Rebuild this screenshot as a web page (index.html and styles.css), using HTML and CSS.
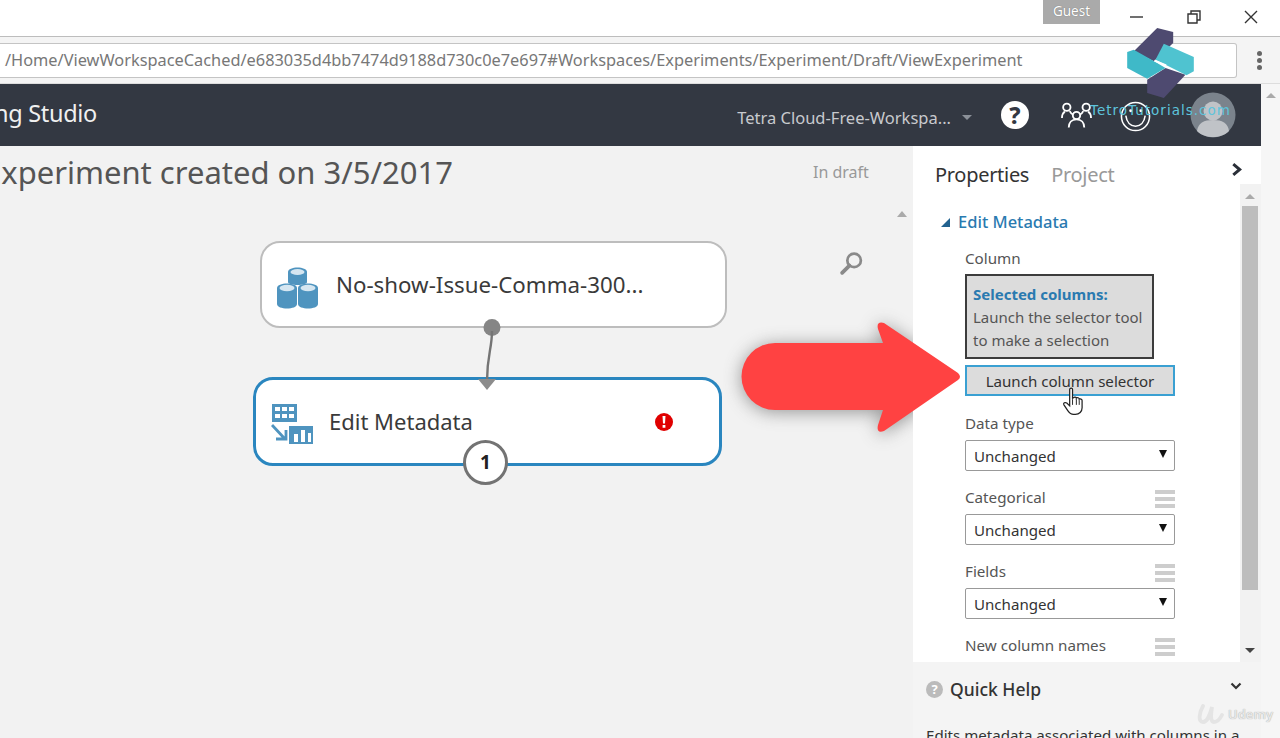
FILE: index.html
```html
<!DOCTYPE html>
<html lang="en">
<head>
<meta charset="utf-8">
<title>Experiment</title>
<link rel="stylesheet" href="styles.css">
</head>
<body>
<div class="page">
  <div class="titlebar">
    <span class="guest">Guest</span>
    <div class="winbtns">
      <svg class="winicon" viewBox="0 0 14 14"><path d="M0 7H13" /></svg>
      <svg class="winicon" viewBox="0 0 14 14"><path d="M1 4H10V13H1ZM4 4V1H13V10H10" /></svg>
      <svg class="winicon" viewBox="0 0 14 14"><path d="M1 1L13 13M13 1L1 13" /></svg>
    </div>
  </div>
  <div class="addressrow">
    <div class="address">/Home/ViewWorkspaceCached/e683035d4bb7474d9188d730c0e7e697#Workspaces/Experiments/Experiment/Draft/ViewExperiment</div>
    <div class="kebab"><i></i><i></i><i></i></div>
  </div>
  <div class="viewport">
    <div class="app">
      <header class="appbar">
        <span class="brand">ng Studio</span>
        <div class="appbar-right">
          <span class="workspace">Tetra Cloud-Free-Workspa...</span>
          <span class="caret"></span>
          <span class="help">?</span>
          <svg class="people" viewBox="0 0 32 28"><g fill="none" stroke="#fff" stroke-width="1.9"><circle cx="6" cy="6" r="3.8"/><circle cx="26" cy="6" r="3.8"/><circle cx="16" cy="14.500" r="3.8"/><path d="M1 17c0-3 1-5 3-6.500M31 17c0-3-1-5-3-6.500M9 10c1 2 2 3 3.500 3.500M23 10c-1 2-2 3-3.500 3.500M8 27c0-5 3-8.500 8-8.500s8 3.500 8 8.500"/></g></svg>
          <svg class="smile" viewBox="0 0 32 32"><g fill="none" stroke="#fff" stroke-width="1.6"><circle cx="16" cy="16" r="14.500"/><path d="M6 15c1 7 5 11 10 11s9-4 10-11"/></g><circle cx="11" cy="10" r="1.500" fill="#fff"/><circle cx="21.500" cy="10" r="1.500" fill="#fff"/></svg>
          <svg class="avatar" viewBox="0 0 46 46"><circle cx="23" cy="23" r="22.500" fill="#7b838c"/><circle cx="23" cy="19" r="9.500" fill="#c0c3c7"/><path d="M7 39c1-8 7-11 16-11s15 3 16 11c-4 4-10 6-16 6S11 43 7 39Z" fill="#c0c3c7"/></svg>
        </div>
      </header>
      <div class="workarea">
        <main class="canvas">
          <h1 class="exptitle">Experiment created on 3/5/2017</h1>
          <span class="draft">In draft</span>
          <span class="canvas-up"></span>
          <svg class="search" viewBox="0 0 24 24"><circle cx="14.500" cy="9" r="6.500" fill="none" stroke="#8a8a8a" stroke-width="2.600"/><path d="M10 14L3 21" stroke="#8a8a8a" stroke-width="3.600" stroke-linecap="round"/></svg>

          <div class="node node-data">
            <svg class="node-icon" viewBox="0 0 42 42">
              <g fill="#4f94bf"><path d="M11 5c0-6 19-6 19 0v10c0 4-19 4-19 0Z"/><path d="M0 21c0-6 20-6 20 0v16c0 6-20 6-20 0Z"/><path d="M21 21c0-6 20-6 20 0v16c0 6-20 6-20 0Z"/></g>
              <g fill="#d5e6f1"><ellipse cx="20.500" cy="5" rx="7" ry="3"/><ellipse cx="10" cy="21" rx="7.500" ry="3.200"/><ellipse cx="31" cy="21" rx="7.500" ry="3.200"/></g>
            </svg>
            <span>No-show-Issue-Comma-300...</span>
          </div>
          <div class="node node-edit">
            <svg class="node-icon" viewBox="0 0 42 42">
              <path d="M1 1H26V19H1Z" fill="#4f94bf"/>
              <g fill="#fff"><path d="M4 4H9V8H4ZM11 4H16V8H11ZM18 4H23V8H18ZM4 11H9V15H4ZM11 11H16V15H11ZM18 11H23V15H18Z"/></g>
              <path d="M18 23H42V41H18Z" fill="#4f94bf"/>
              <path d="M23 31H27V39H23ZM30 27H34V39H30ZM37 30H40V39H37Z" fill="#fff"/>
              <path d="M1 22L14 36M5 36H15V27" fill="none" stroke="#4f94bf" stroke-width="2.800"/>
            </svg>
            <span>Edit Metadata</span>
            <svg class="alert" viewBox="0 0 18 18"><circle cx="9" cy="9" r="9" fill="#e00000"/><path d="M7.500 3H10.500L10 10.500H8ZM7.600 12H10.400V14.800H7.600Z" fill="#fff"/></svg>
            <span class="badge">1</span>
          </div>
          <svg class="wire" viewBox="0 0 30 74"><circle cx="15" cy="8.500" r="8.500" fill="#858585"/><path d="M15 12C15 30 10 36 10 62" fill="none" stroke="#757575" stroke-width="2.400"/><path d="M1 60H19L10 71Z" fill="#8c8c8c"/></svg>
          <svg class="arrow-shadow" viewBox="0 0 240 125"><path d="M39 28H147L142 14Q140 6 148 8L222 58Q226 62 222 65L148 116Q140 119 142 110L147 95H39A33.500 33.500 0 0 1 39 28Z" fill="#555"/></svg>
        </main>
        <aside class="panel">
          <div class="tabs">
            <span class="tab-active">Properties</span>
            <span class="tab">Project</span>
            <svg class="tabs-chevron" viewBox="0 0 10 14"><path d="M2 2L8 7L2 12" fill="none" stroke="#2a2f38" stroke-width="2.800"/></svg>
          </div>
          <div class="props-wrap">
            <div class="props">
              <div class="section"><span class="section-tri"></span><span>Edit Metadata</span></div>
              <div class="field">
                <div class="label">Column</div>
                <div class="selected">
                  <strong>Selected columns:</strong>
                  <span>Launch the selector tool to make a selection</span>
                </div>
                <button class="launch">Launch column selector</button>
              </div>
              <div class="field field-datatype">
                <div class="label">Data type</div>
                <div class="select">Unchanged<span class="sel-tri"></span></div>
              </div>
              <div class="field">
                <div class="label labelrow">Categorical<span class="lines"><i></i><i></i><i></i></span></div>
                <div class="select">Unchanged<span class="sel-tri"></span></div>
              </div>
              <div class="field">
                <div class="label labelrow">Fields<span class="lines"><i></i><i></i><i></i></span></div>
                <div class="select">Unchanged<span class="sel-tri"></span></div>
              </div>
              <div class="field">
                <div class="label labelrow">New column names<span class="lines"><i></i><i></i><i></i></span></div>
              </div>
            </div>
            <div class="vscroll">
              <span class="vs-up"></span>
              <span class="vs-thumb"></span>
              <span class="vs-down"></span>
            </div>
          </div>
          <div class="quick">
            <div class="quick-head"><span class="q-icon">?</span><span class="q-title">Quick Help</span><svg class="q-chev" viewBox="0 0 12 8"><path d="M1.500 1.500L6 6L10.500 1.500" fill="none" stroke="#333" stroke-width="2.200"/></svg></div>
            <p class="quick-text">Edits metadata associated with columns in a</p>
          </div>
        </aside>
      </div>
    </div>
    <div class="pagescroll"><span class="ps-up"></span></div>
  </div>

  <svg class="arrow" viewBox="0 0 240 125">
    <path d="M39 28H147L142 14Q140 6 148 8L222 58Q226 62 222 65L148 116Q140 119 142 110L147 95H39A33.500 33.500 0 0 1 39 28Z" fill="#ff4242"/>
  </svg>
  <svg class="cursor" viewBox="0 0 22 30"><path d="M7 2c0-2 3-2 3 0v9l1-.5c1-1 3-.5 3 .5 1-1 3-.5 3 1 1-.5 3 0 3 1.500V21c0 4-3 7-7 7h-2c-3 0-4-1-6-4L1 18c-1-2 1-3 3-2l3 3Z" fill="#fff" stroke="#222" stroke-width="1.300"/><path d="M10 12v6M14 12v6M17 13v5" stroke="#222" stroke-width="1"/></svg>

  <svg class="logo" viewBox="380 85 200 210">
    <path d="M470 85L518 97V130L460 185L400 155Z" fill="#4e4a70"/>
    <path d="M495 205L555 225L490 295L440 280V240Z" fill="#4e4a70"/>
    <path d="M490 132L580 172V215L558 227L465 180Z" fill="#4fc3d0"/>
    <path d="M380 157L400 150L465 187L495 205L440 237L380 205Z" fill="#3fb9c8"/>
    <path d="M462 183L497 197" stroke="#fff" stroke-width="6"/>
  </svg>
  <span class="wm-tetra">TetroTutorials.com</span>
  <div class="wm-udemy"><svg class="u-mark" viewBox="0 0 28 20"><path d="M6 2C2 9 1 18 6 18c5 0 7-8 9-15-1 7-2 15 2 15 4 0 6-3 8-7" fill="none" stroke="#e4e4e4" stroke-width="3.800" stroke-linecap="round"/></svg><span>Udemy</span></div>
</div>
</body>
</html>
```
FILE: styles.css
```css
* { box-sizing: border-box; }
html, body { margin: 0; padding: 0; height: 738px; overflow: hidden; background: #fff; }
body { font-family: "Noto Sans", "Open Sans", sans-serif; color: #333; }
.page { position: relative; width: 1280px; height: 738px; overflow: hidden; display: flex; flex-direction: column; }

.titlebar { height: 37px; flex: none; background: #fff; display: flex; justify-content: flex-end; border-bottom: 1px solid #bdbdbd; padding-right: 22px; }
.guest { width: 57px; height: 24px; margin-right: 30px; background: #aaa; color: #fff; font-size: 13.500px; text-align: center; line-height: 23px; text-shadow: 0 0 1px #666; }
.winbtns { display: flex; gap: 43px; padding-top: 10px; }
.winicon { width: 14px; height: 14px; fill: none; stroke: #333; stroke-width: 1.400; }

.addressrow { height: 47px; flex: none; background: #f4f4f4; display: flex; align-items: center; border-bottom: 1px solid #ddd; }
.address { width: 1237px; height: 35px; background: #fff; border: 1px solid #c4c4c4; border-left: 0; border-radius: 0 3px 3px 0; font-size: 16.350px; line-height: 33px; color: #777; padding-left: 5px; white-space: nowrap; overflow: hidden; }
.kebab { width: 43px; display: flex; flex-direction: column; align-items: center; gap: 2px; padding-left: 2px; }
.kebab i { width: 5px; height: 5px; border-radius: 50%; background: #666; }

.viewport { flex: 1; display: flex; min-height: 0; }
.app { width: 1261px; display: flex; flex-direction: column; }
.appbar { height: 62px; flex: none; background: #333842; color: #fff; display: flex; align-items: center; justify-content: space-between; overflow: hidden; }
.brand { font-size: 23.500px; letter-spacing: -.3px; margin: -4px 0 0 -6px; color: #f0f0f0; }
.appbar-right { display: flex; align-items: center; padding-right: 25px; }
.workspace { font-size: 16.500px; color: #c8cace; margin-top: 4px; }
.caret { width: 0; height: 0; border: 5px solid transparent; border-top: 5px solid #8b9098; margin: 9px 0 0 11px; }
.help { width: 28px; height: 28px; margin-left: 29px; border-radius: 50%; background: #fff; color: #333842; font-weight: 800; font-size: 23px; line-height: 28px; text-align: center; }
.people { width: 31px; height: 28px; margin-left: 32px; }
.smile { width: 31px; height: 31px; margin-left: 28px; margin-top: 2px; }
.avatar { width: 46px; height: 46px; margin-left: 39px; }

.workarea { flex: 1; display: flex; min-height: 0; }
.canvas { position: relative; width: 913px; background: #f2f2f2; overflow: hidden; }
.exptitle { position: absolute; left: -16px; top: 5px; margin: 0; font-size: 31px; font-weight: 400; color: #555; white-space: nowrap; }
.draft { position: absolute; left: 813px; top: 15px; font-size: 16px; color: #999; }
.canvas-up { position: absolute; left: 897px; top: 65px; border: 5px solid transparent; border-top: 0; border-bottom: 6px solid #aaa; }
.search { position: absolute; left: 839px; top: 105px; width: 25px; height: 25px; }
.node { position: absolute; background: #fff; display: flex; align-items: center; color: #3a3a3a; white-space: nowrap; }
.node-data { left: 260px; top: 95px; width: 467px; height: 87px; border: 2px solid #bdbdbd; border-radius: 20px; padding-left: 15px; gap: 17px; font-size: 22.300px; }
.node-data .node-icon { margin-top: 6px; }
.node-edit { left: 253px; top: 231px; width: 469px; height: 89px; border: 3px solid #2a86bf; border-radius: 20px; padding-left: 15px; gap: 16px; font-size: 22px; padding-bottom: 1px; }
.node-edit .node-icon { margin-top: 6px; }
.node-icon { width: 42px; height: 42px; flex: none; }
.alert { position: absolute; left: 399px; top: 33px; width: 18px; height: 18px; }
.badge { position: absolute; left: 207px; top: 60px; width: 45px; height: 45px; border-radius: 50%; background: #fff; border: 3px solid #737373; font-size: 19px; font-weight: 700; line-height: 38px; text-align: center; color: #222; }
.wire { position: absolute; left: 477px; top: 173px; width: 30px; height: 74px; }
.arrow-shadow { position: absolute; left: 736px; top: 171px; width: 240px; height: 125px; filter: blur(9px); opacity: .6; }

.panel { width: 348px; background: #fff; display: flex; flex-direction: column; }
.tabs { height: 38px; flex: none; display: flex; align-items: flex-start; padding: 15px 0 0 22px; background: #fff; position: relative; font-size: 20px; letter-spacing: -.3px; gap: 22px; }
.tab-active { color: #333; }
.tab { color: #999; }
.tabs-chevron { position: absolute; left: 318px; top: 16px; width: 11px; height: 15px; }
.props-wrap { flex: 1; display: flex; min-height: 0; }
.props { width: 327px; background: #fff; padding: 24px 0 0 28px; overflow: hidden; }
.section { display: flex; align-items: center; gap: 8px; font-size: 16.500px; font-weight: 500; color: #2a7ab0; height: 26px; }
.section-tri { width: 0; height: 0; border-style: solid; border-width: 0 0 9px 9px; border-color: transparent transparent #22628f transparent; margin-top: 2px; }
.field { margin-left: 24px; width: 210px; margin-bottom: 16px; }
.label { font-size: 15.200px; color: #555; height: 27px; line-height: 20px; }
.labelrow { display: flex; justify-content: space-between; }
.field:nth-child(2) { margin-top: 13px; }
.field:nth-child(2) .label { line-height: 22px; }
.selected { width: 189px; height: 85px; background: #dcdcdc; border: 2px solid #3c3c3c; font-size: 15px; line-height: 23px; color: #555; padding: 7px 2px 7px 6px; }
.selected strong { display: block; color: #2a7ab0; font-weight: 700; }
.launch { display: block; margin-top: 6px; width: 210px; height: 31px; background: #dcdcdc; border: 2px solid #3aa0d2; font: inherit; font-size: 15.100px; color: #333; padding: 0; line-height: 26px; }
.field-datatype { margin-top: 17px; }
.select { position: relative; width: 210px; height: 31px; background: #fff; border: 1px solid #999; border-radius: 2px; font-size: 15.100px; line-height: 31px; color: #333; padding-left: 8px; }
.sel-tri { position: absolute; right: 7px; top: 9px; border: 4px solid transparent; border-bottom: 0; border-top: 8px solid #111; }
.lines { display: flex; flex-direction: column; gap: 3px; width: 20px; margin-top: 3px; }
.lines i { height: 4px; background: #cdcdcd; }
.vscroll { position: relative; width: 21px; background: #f2f2f2; margin-top: 0; }
.vs-up { position: absolute; left: 5px; top: 10px; border: 5px solid transparent; border-top: 0; border-bottom: 5px solid #aaa; }
.vs-thumb { position: absolute; left: 2px; top: 22px; width: 16px; height: 384px; background: #bdbdbd; }
.vs-down { position: absolute; left: 5px; top: 464px; border: 5px solid transparent; border-bottom: 0; border-top: 5px solid #444; }
.quick { height: 76px; flex: none; background: #f4f4f4; overflow: hidden; padding: 15px 0 0 13px; }
.quick-head { display: flex; align-items: center; height: 24px; position: relative; }
.q-icon { width: 17px; height: 17px; border-radius: 50%; background: #bbb; color: #fff; font-size: 13px; font-weight: 700; line-height: 17px; text-align: center; }
.q-title { margin-left: 7px; font-size: 17.500px; font-weight: 500; color: #333; }
.q-chev { position: absolute; left: 304px; top: 5px; width: 12px; height: 8px; }
.quick-text { margin: 24px 0 0 0; font-size: 15.100px; white-space: nowrap; color: #333; }
.pagescroll { position: relative; width: 19px; background: #f6f6f6; }
.ps-up { position: absolute; left: 5px; top: 9px; border: 5px solid transparent; border-top: 0; border-bottom: 5px solid #aaa; }

.arrow { position: absolute; left: 736px; top: 315px; width: 240px; height: 125px; }
.cursor { position: absolute; left: 1063px; top: 387px; width: 21px; height: 30px; }
.logo { position: absolute; left: 1127px; top: 28px; width: 67px; height: 70px; }
.wm-tetra { position: absolute; left: 1090px; top: 102px; font-size: 13.500px; letter-spacing: 1px; color: #5ec4dc; white-space: nowrap; font-family: "DejaVu Sans", sans-serif; }
.wm-udemy { position: absolute; left: 1197px; top: 704px; display: flex; align-items: center; gap: 3px; color: #e8e8e8; font-size: 13px; font-weight: 600; text-shadow: 0 0 1px #999; }
.u-mark { width: 28px; height: 20px; }
```
